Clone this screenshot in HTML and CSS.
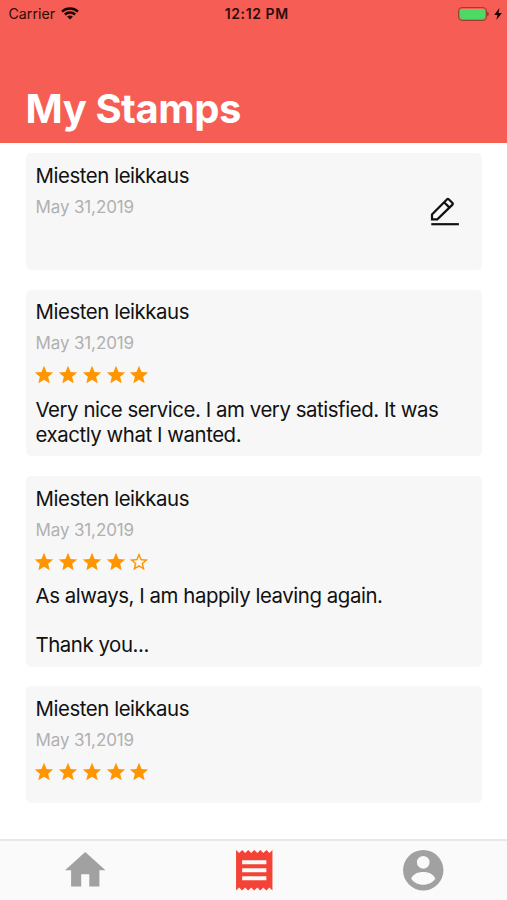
FILE: index.html
```html
<!DOCTYPE html>
<html lang="en">
<head>
  <meta charset="UTF-8">
  <meta name="viewport" content="width=device-width, initial-scale=1.0">
  <title>My Stamps</title>
  <link rel="stylesheet" href="styles.css">
</head>
<body>

<svg class="defs" width="0" height="0">
  <symbol id="star" viewBox="0 0 24 24">
    <path d="M12 17.27L18.18 21l-1.64-7.03L22 9.24l-7.19-.61L12 2 9.19 8.63 2 9.24l5.46 4.73L5.82 21z"/>
  </symbol>
  <symbol id="star-empty" viewBox="0 0 24 24">
    <path d="M22 9.24l-7.19-.62L12 2 9.19 8.63 2 9.24l5.46 4.73L5.82 21 12 17.27 18.18 21l-1.63-7.03L22 9.24zM12 15.4l-3.76 2.27 1-4.28-3.32-2.88 4.38-.38L12 6.1l1.71 4.04 4.38.38-3.32 2.88 1 4.28L12 15.4z"/>
  </symbol>
</svg>

<header>
  <div class="status">
    <div class="carrier">
      Carrier
      <svg class="wifi" viewBox="0 0 17 12">
        <path d="M.9 4.3C5.1.4 11.9.4 16.1 4.3M3.6 7.1C6.4 4.6 10.6 4.6 13.4 7.1"/>
        <path class="dot" d="M5.7 9.1C7.4 7.7 9.6 7.7 11.3 9.1L8.5 11.9z"/>
      </svg>
    </div>
    <div class="time">12:12 PM</div>
    <div class="power">
      <div class="battery"></div>
      <svg class="bolt" viewBox="0 0 8 12"><path d="M5.4 0L.2 6.9H3.4L2.4 12 7.9 4.9H4.6z"/></svg>
    </div>
  </div>
  <h1>My Stamps</h1>
</header>

<main>
  <section class="card short">
    <h2>Miesten leikkaus</h2>
    <p class="date">May 31,2019</p>
    <svg class="edit" viewBox="0 0 30 30">
      <path d="M2 23.4V18.5L17.1 3.2Q17.9 2.4 18.7 3.2L22.5 7Q23.3 7.8 22.5 8.6L7.3 23.4zM14.1 6.2L19.5 11.6"/>
      <path d="M1.3 28.2H28.9"/>
    </svg>
  </section>

  <section class="card">
    <h2>Miesten leikkaus</h2>
    <p class="date">May 31,2019</p>
    <div class="stars">
      <svg><use href="#star"/></svg>
      <svg><use href="#star"/></svg>
      <svg><use href="#star"/></svg>
      <svg><use href="#star"/></svg>
      <svg><use href="#star"/></svg>
    </div>
    <p class="review">Very nice service. I am very satisfied. It was
exactly what I wanted.</p>
  </section>

  <section class="card">
    <h2>Miesten leikkaus</h2>
    <p class="date">May 31,2019</p>
    <div class="stars">
      <svg><use href="#star"/></svg>
      <svg><use href="#star"/></svg>
      <svg><use href="#star"/></svg>
      <svg><use href="#star"/></svg>
      <svg><use href="#star-empty"/></svg>
    </div>
    <p class="review">As always, I am happily leaving again.

Thank you...</p>
  </section>

  <section class="card short">
    <h2>Miesten leikkaus</h2>
    <p class="date">May 31,2019</p>
    <div class="stars">
      <svg><use href="#star"/></svg>
      <svg><use href="#star"/></svg>
      <svg><use href="#star"/></svg>
      <svg><use href="#star"/></svg>
      <svg><use href="#star"/></svg>
    </div>
  </section>
</main>

<nav>
  <a class="tab">
    <svg viewBox="0 0 24 24"><path d="M10 20v-6h4v6h5v-8h3L12 3 2 12h3v8z"/></svg>
  </a>
  <a class="tab active">
    <svg viewBox="0 0 24 24"><path d="M18 17H6v-2h12v2zm0-4H6v-2h12v2zm0-4H6V7h12v2zM3 22l1.5-1.5L6 22l1.5-1.5L9 22l1.5-1.5L12 22l1.5-1.5L15 22l1.5-1.5L18 22l1.5-1.5L21 22V2l-1.5 1.5L18 2l-1.5 1.5L15 2l-1.5 1.5L12 2l-1.5 1.5L9 2 7.5 3.5 6 2 4.5 3.5 3 2v20z"/></svg>
  </a>
  <a class="tab">
    <svg viewBox="0 0 24 24"><path fill-rule="evenodd" d="M12 2a10 10 0 1 0 0 20 10 10 0 0 0 0-20zM12 4.9a3.15 3.15 0 1 1 0 6.3 3.15 3.15 0 0 1 0-6.3zM6 16.1C7.2 13.9 9.2 12.9 12 12.9S16.8 13.9 18 16.1C16.7 18.1 14.6 19.2 12 19.2S7.3 18.1 6 16.1z"/></svg>
  </a>
</nav>

</body>
</html>
```

FILE: styles.css
```css
* {
  box-sizing: border-box;
}
body {
  display: flex;
  flex-direction: column;
  height: 900px;
  margin: 0;
  background-color: #ffffff;
  font-family: Inter, "Liberation Sans", sans-serif;
  color: #111111;
}
h1, h2, p {
  margin: 0;
  font-weight: normal;
}
.defs {
  position: absolute;
}
header {
  height: 143px;
  background-color: #f65d54;
  border-bottom: 1px solid #f4604c;
}
.status {
  display: grid;
  grid-template-columns: 1fr auto 1fr;
  align-items: center;
  height: 27px;
  padding: 0 5px 0 8.5px;
  font-size: 14.2px;
  color: #2b0d0b;
}
.carrier, .power {
  display: flex;
  align-items: center;
}
.wifi {
  width: 18px;
  height: 12.7px;
  margin-left: 6px;
  fill: none;
  stroke: #1c0605;
  stroke-width: 2.3;
}
.wifi .dot {
  fill: #1c0605;
  stroke: none;
}
.time {
  padding-left: 3px;
  font-size: 14px;
  font-weight: 600;
  letter-spacing: 0.6px;
}
.power {
  justify-content: flex-end;
}
.battery {
  position: relative;
  width: 29px;
  height: 14px;
  border: 1px solid #9e3c36;
  border-radius: 4px;
  padding: 1px;
}
.battery::before {
  content: "";
  display: block;
  height: 100%;
  border-radius: 2px;
  background-color: #4cd964;
}
.battery::after {
  content: "";
  position: absolute;
  top: 4px;
  right: -3px;
  width: 2px;
  height: 4px;
  border-radius: 0 2px 2px 0;
  background-color: #9e3c36;
}
.bolt {
  width: 8px;
  height: 12px;
  margin-left: 7px;
  fill: #1c0605;
}
h1 {
  padding: 57px 25.5px 0;
  font-size: 40px;
  line-height: 50px;
  font-weight: 700;
  letter-spacing: -0.45px;
  color: #ffffff;
}
main {
  display: flex;
  flex-direction: column;
  flex: 1;
  gap: 19.6px;
  padding: 10px 25px 0 26px;
}
.card {
  position: relative;
  padding: 10.8px 9.5px 9px;
  border-radius: 5px;
  background-color: #f7f7f7;
}
.short {
  height: 117px;
}
h2, .review {
  font-size: 20.4px;
  line-height: 24.5px;
  letter-spacing: -0.44px;
}
.date {
  margin-top: 7.5px;
  font-size: 17px;
  line-height: 22px;
  letter-spacing: -0.13px;
  color: #b0b0b0;
}
.stars {
  display: flex;
  gap: 1.8px;
  height: 22px;
  margin: 10px 0 0 -2.3px;
  fill: #ff9500;
}
.stars svg {
  width: 22px;
  height: 22px;
}
.review {
  margin-top: 11.8px;
  white-space: pre-line;
}
.edit {
  position: absolute;
  top: 43px;
  right: 22px;
  width: 30px;
  height: 30px;
  fill: none;
  stroke: #111111;
  stroke-width: 2.2;
}
nav {
  display: flex;
  height: 61px;
  border-top: 2px solid #e8e8e8;
  background-color: #fafafa;
}
.tab {
  display: flex;
  flex: 1;
  align-items: center;
  justify-content: center;
  padding-left: 1px;
}
.tab svg {
  width: 48.5px;
  height: 48.5px;
  fill: #a1a1a1;
}
.tab.active svg {
  fill: #f44336;
}
```
